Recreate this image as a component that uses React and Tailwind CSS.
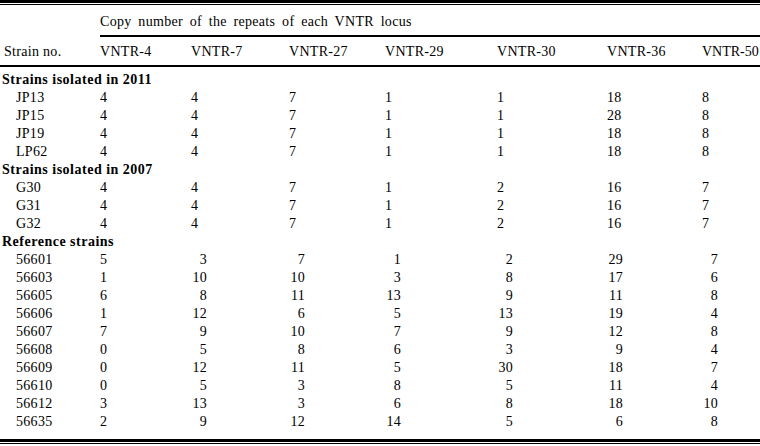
import React from "react";

const cols = ["VNTR-4", "VNTR-7", "VNTR-27", "VNTR-29", "VNTR-30", "VNTR-36", "VNTR-50"];

const sections = [
  {
    title: "Strains isolated in 2011",
    align: "left",
    rows: [
      ["JP13", 4, 4, 7, 1, 1, 18, 8],
      ["JP15", 4, 4, 7, 1, 1, 28, 8],
      ["JP19", 4, 4, 7, 1, 1, 18, 8],
      ["LP62", 4, 4, 7, 1, 1, 18, 8],
    ],
  },
  {
    title: "Strains isolated in 2007",
    align: "left",
    rows: [
      ["G30", 4, 4, 7, 1, 2, 16, 7],
      ["G31", 4, 4, 7, 1, 2, 16, 7],
      ["G32", 4, 4, 7, 1, 2, 16, 7],
    ],
  },
  {
    title: "Reference strains",
    align: "right",
    rows: [
      ["56601", 5, 3, 7, 1, 2, 29, 7],
      ["56603", 1, 10, 10, 3, 8, 17, 6],
      ["56605", 6, 8, 11, 13, 9, 11, 8],
      ["56606", 1, 12, 6, 5, 13, 19, 4],
      ["56607", 7, 9, 10, 7, 9, 12, 8],
      ["56608", 0, 5, 8, 6, 3, 9, 4],
      ["56609", 0, 12, 11, 5, 30, 18, 7],
      ["56610", 0, 5, 3, 8, 5, 11, 4],
      ["56612", 3, 13, 3, 6, 8, 18, 10],
      ["56635", 2, 9, 12, 14, 5, 6, 8],
    ],
  },
];

const grid = "grid grid-cols-[100px_91px_98px_96px_112px_110px_95px_1fr]";

function Row({ row, align }) {
  const [name, ...vals] = row;
  return (
    <div className={`${grid} h-[18px] items-center`}>
      <div className="pl-[16px]">{name}</div>
      {vals.map((v, i) =>
        align === "right" && i > 0 ? (
          <div key={i}>
            <span className="inline-block w-[16px] text-right">{v}</span>
          </div>
        ) : (
          <div key={i}>{v}</div>
        )
      )}
    </div>
  );
}

export default function App() {
  return (
    <div
      className="w-[760px] h-[446px] overflow-hidden bg-white text-black text-[14px] tracking-[0.3px] leading-none"
      style={{ fontFamily: '"Liberation Serif", "Times New Roman", serif' }}
    >
      <div className="h-[3px] bg-black" />
      <div className="mt-[1px] h-[1px] bg-black" />

      <div className="flex h-[30px] items-center pl-[100px] pt-[3px] whitespace-nowrap [word-spacing:3px]">
        Copy number of the repeats of each VNTR locus
      </div>
      <div className="ml-[100px] h-[2px] bg-black" />

      <div className={`${grid} h-[28px] items-center pt-[2px]`}>
        <div className="pl-[4px]">Strain no.</div>
        {cols.map((c) => (
          <div key={c} className="whitespace-nowrap last:tracking-normal">
            {c}
          </div>
        ))}
      </div>
      <div className="h-[2px] bg-black" />

      <div className="pt-[4px] pb-[8px]">
        {sections.map((s) => (
          <div key={s.title}>
            <div className="flex h-[18px] items-center pl-[2px] font-bold tracking-[0.5px] whitespace-nowrap">
              {s.title}
            </div>
            {s.rows.map((r) => (
              <Row key={r[0]} row={r} align={s.align} />
            ))}
          </div>
        ))}
      </div>

      <div className="h-[3px] bg-black" />
      <div className="mt-[1px] h-[1px] bg-black" />
    </div>
  );
}
